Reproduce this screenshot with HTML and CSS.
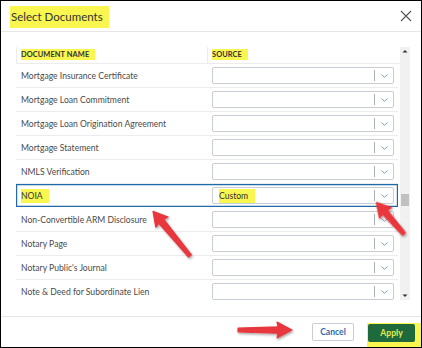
FILE: index.html
```html
<!DOCTYPE html>
<html>
<head>
  <title>Select Documents</title>
  <meta charset="utf-8">
  <link rel="stylesheet" href="styles.css">
</head>
<body>
  <div class="dialog">
    <div class="dlg-head">
      <h2 class="title"><span class="hl">Select Documents</span></h2>
      <button class="close" aria-label="Close">
        <svg width="12" height="12" viewBox="0 0 12 12"><path d="M1 1L11 11M11 1L1 11" stroke="#555" stroke-width="1.1" fill="none"/></svg>
      </button>
    </div>

    <div class="dlg-body">
      <div class="grid">
        <div class="table">
          <div class="thead">
            <div class="th"><span class="hl">DOCUMENT NAME</span></div>
            <div class="th"><span class="hl">SOURCE</span></div>
          </div>
          <div class="tbody">
            <div class="row"><div class="name">Mortgage Insurance Certificate</div><div class="src"><div class="select"><span class="val"></span><span class="sep"></span><svg class="chev" width="7" height="4" viewBox="0 0 7 4"><path d="M0.5 0.5L3.5 3.3L6.5 0.5" stroke="#7d9bbd" fill="none"/></svg></div></div></div>
            <div class="row"><div class="name">Mortgage Loan Commitment</div><div class="src"><div class="select"><span class="val"></span><span class="sep"></span><svg class="chev" width="7" height="4" viewBox="0 0 7 4"><path d="M0.5 0.5L3.5 3.3L6.5 0.5" stroke="#7d9bbd" fill="none"/></svg></div></div></div>
            <div class="row"><div class="name">Mortgage Loan Origination Agreement</div><div class="src"><div class="select"><span class="val"></span><span class="sep"></span><svg class="chev" width="7" height="4" viewBox="0 0 7 4"><path d="M0.5 0.5L3.5 3.3L6.5 0.5" stroke="#7d9bbd" fill="none"/></svg></div></div></div>
            <div class="row"><div class="name">Mortgage Statement</div><div class="src"><div class="select"><span class="val"></span><span class="sep"></span><svg class="chev" width="7" height="4" viewBox="0 0 7 4"><path d="M0.5 0.5L3.5 3.3L6.5 0.5" stroke="#7d9bbd" fill="none"/></svg></div></div></div>
            <div class="row"><div class="name">NMLS Verification</div><div class="src"><div class="select"><span class="val"></span><span class="sep"></span><svg class="chev" width="7" height="4" viewBox="0 0 7 4"><path d="M0.5 0.5L3.5 3.3L6.5 0.5" stroke="#7d9bbd" fill="none"/></svg></div></div></div>
            <div class="row selected"><div class="name"><span class="hl">NOIA</span></div><div class="src"><div class="select"><span class="val"><span class="hl">Custom</span></span><span class="sep"></span><svg class="chev" width="7" height="4" viewBox="0 0 7 4"><path d="M0.5 0.5L3.5 3.3L6.5 0.5" stroke="#7d9bbd" fill="none"/></svg></div></div></div>
            <div class="row"><div class="name">Non-Convertible ARM Disclosure</div><div class="src"><div class="select"><span class="val"></span><span class="sep"></span><svg class="chev" width="7" height="4" viewBox="0 0 7 4"><path d="M0.5 0.5L3.5 3.3L6.5 0.5" stroke="#7d9bbd" fill="none"/></svg></div></div></div>
            <div class="row"><div class="name">Notary Page</div><div class="src"><div class="select"><span class="val"></span><span class="sep"></span><svg class="chev" width="7" height="4" viewBox="0 0 7 4"><path d="M0.5 0.5L3.5 3.3L6.5 0.5" stroke="#7d9bbd" fill="none"/></svg></div></div></div>
            <div class="row"><div class="name">Notary Public's Journal</div><div class="src"><div class="select"><span class="val"></span><span class="sep"></span><svg class="chev" width="7" height="4" viewBox="0 0 7 4"><path d="M0.5 0.5L3.5 3.3L6.5 0.5" stroke="#7d9bbd" fill="none"/></svg></div></div></div>
            <div class="row"><div class="name">Note &amp; Deed for Subordinate Lien</div><div class="src"><div class="select"><span class="val"></span><span class="sep"></span><svg class="chev" width="7" height="4" viewBox="0 0 7 4"><path d="M0.5 0.5L3.5 3.3L6.5 0.5" stroke="#7d9bbd" fill="none"/></svg></div></div></div>
          </div>
        </div>
        <div class="scrollbar">
          <svg width="10" height="8" viewBox="0 0 10 8"><path d="M2.5 5.5L5 3L7.5 5.5Z" fill="#333"/></svg>
          <div class="track"><div class="thumb"></div></div>
          <svg width="10" height="8" viewBox="0 0 10 8"><path d="M2.5 2.5L5 5L7.5 2.5Z" fill="#333"/></svg>
        </div>
      </div>
    </div>

    <div class="dlg-foot">
      <button class="btn btn-cancel">Cancel</button>
      <div class="apply-wrap"><button class="btn btn-apply">Apply</button></div>
    </div>

    <!-- annotation arrows drawn over the dialog -->
    <svg class="arrows" width="422" height="348" viewBox="0 0 422 348">
      <defs>
        <filter id="shadow" x="-20%" y="-20%" width="140%" height="140%">
          <feDropShadow dx="1" dy="1.5" stdDeviation="1" flood-color="#000" flood-opacity="0.35"/>
        </filter>
      </defs>
      <g fill="#e8373c" stroke="#e8373c" stroke-width="1.2" stroke-linejoin="round" filter="url(#shadow)">
        <path transform="translate(190 256) rotate(-129.6)" d="M0 -1.8L45 -3.2L44 -8L58 0L44 8L45 3.2L0 1.8Z"/>
        <path transform="translate(404 234) rotate(-131.2)" d="M0 -1.8L29 -3.2L28 -8L42 0L28 8L29 3.2L0 1.8Z"/>
        <path transform="translate(238 330)" d="M0 -1.8L40 -3.2L39 -8L54 0L39 8L40 3.2L0 1.8Z"/>
      </g>
    </svg>
  </div>
</body>
</html>
```

FILE: styles.css
```css
html, body {
  margin: 0;
  padding: 0;
  background: #fff;
}
body {
  font-family: Lato, "Liberation Sans", Arial, sans-serif;
  color: #444;
}
.dialog {
  position: relative;
  width: 422px;
  height: 348px;
  box-sizing: border-box;
  border: 1px solid #000;
  background: white;
  display: flex;
  flex-direction: column;
}
.hl {
  background-color: #f9f650;
}

/* header */
.dlg-head {
  height: 30px;
  display: flex;
  align-items: center;
  justify-content: space-between;
  border-bottom: 1px solid #e6e6e6;
  padding: 0 9px 0 9px;
}
.title {
  margin: 0;
  font-size: 11.5px;
  font-weight: normal;
  color: #333;
}
.title .hl {
  padding: 4px 6px 5px 1px;
}
.close {
  border: none;
  background: none;
  padding: 0;
  width: 12px;
  height: 12px;
  margin-top: -1px;
}
.close svg {
  display: block;
}

/* body */
.dlg-body {
  height: 284px;
  padding: 15px 11px 0 15px;
  box-sizing: border-box;
}
.grid {
  display: flex;
  height: 253px;
}
.table {
  flex: 1;
  display: flex;
  flex-direction: column;
  overflow: hidden;
}
.thead {
  display: grid;
  grid-template-columns: 191px 1fr;
  height: 17px;
  border-bottom: 1px solid #ececec;
  box-sizing: border-box;
}
.th {
  border-left: 1px solid #ececec;
  padding-left: 4px;
  font-size: 7.4px;
  font-weight: bold;
  color: #333;
  line-height: 16px;
  letter-spacing: 0.1px;
}
.th .hl {
  padding: 1px 6px 1px 0;
}
.tbody {
  padding-right: 2px;
  overflow: hidden;
}
.row {
  display: grid;
  grid-template-columns: 191px 1fr;
  height: 24px;
  border-bottom: 1px solid #ececec;
  box-sizing: border-box;
  align-items: center;
}
.row.selected {
  box-shadow: inset 0 0 0 1.2px #1f6aa8;
  border-bottom-color: transparent;
}
.name {
  padding-left: 5px;
  font-size: 8.6px;
  color: #4a4a4a;
}
.name .hl {
  padding: 2px 6px 2px 0;
  color: #333;
}
.src {
  padding: 0 4px 0 5px;
}
.select {
  height: 17px;
  box-sizing: border-box;
  border: 1px solid #c7ccd5;
  border-radius: 2px;
  background: white;
  display: flex;
  align-items: center;
  font-size: 8.6px;
  color: #333;
}
.select .val {
  flex: 1;
  padding-left: 6px;
}
.select .val .hl {
  padding: 2px 7px 2px 0;
}
.select .sep {
  width: 1px;
  height: 11px;
  background: #a9afb8;
  margin-right: 6px;
}
.chev {
  margin-right: 5px;
}

/* scrollbar */
.scrollbar {
  width: 10px;
  background: #f1f1f1;
  display: flex;
  flex-direction: column;
}
.scrollbar svg {
  display: block;
}
.track {
  flex: 1;
  position: relative;
}
.thumb {
  margin: 139px 1px 0 1px;
  height: 12px;
  background: #c1c1c1;
}

/* footer */
.dlg-foot {
  flex: 1;
  border-top: 1px solid #e6e6e6;
  display: flex;
  justify-content: flex-end;
  align-items: flex-end;
}
.btn {
  font-family: Lato, "Liberation Sans", Arial, sans-serif;
  font-weight: bold;
  font-size: 8.6px;
  border-radius: 2px;
  cursor: pointer;
}
.btn-cancel {
  width: 42px;
  height: 18px;
  margin: 0 13px 6px 0;
  background: white;
  color: #2d6cab;
  border: 1px solid #c7ccd5;
  padding: 0;
}
.apply-wrap {
  background: #f9f650;
  padding: 1px 6px 5px 1px;
}
.btn-apply {
  display: block;
  width: 47px;
  height: 18px;
  padding: 0;
  border: none;
  background: #1e6a3c;
  color: #e9ea52;
}

.arrows {
  position: absolute;
  left: -1px;
  top: -1px;
  pointer-events: none;
}
```
